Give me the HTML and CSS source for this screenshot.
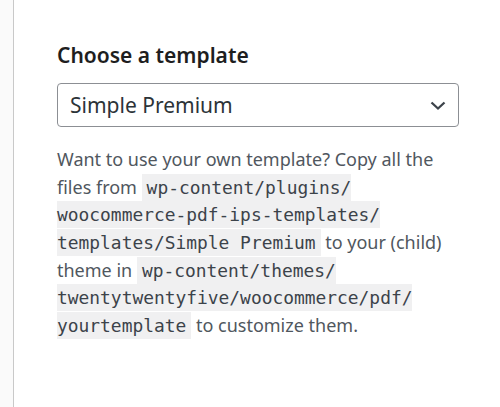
FILE: index.html
```html
<!DOCTYPE html>
<html>
<head>
<meta charset="utf-8">
<link rel="stylesheet" href="styles.css">
</head>
<body>
<div class="layout">
  <aside class="side"></aside>
  <main class="panel">
    <h2 class="title">Choose a template</h2>
    <div class="select">
      <span class="select-value">Simple Premium</span>
      <svg class="chev" width="18" height="11" viewBox="0 0 18 11"><path d="M2.5 2.5 L9 8.5 L15.5 2.5" fill="none" stroke="#3c434a" stroke-width="2.3"/></svg>
    </div>
    <p class="help">Want to use your own template? Copy all the files from <code><span class="seg">wp-content/plugins/</span><wbr><span class="seg">woocommerce-pdf-ips-templates/</span><wbr><span class="seg">templates/Simple Premium</span></code> to your (child) theme in <code><span class="seg">wp-content/themes/</span><wbr><span class="seg">twentytwentyfive/woocommerce/pdf/</span><wbr><span class="seg">yourtemplate</span></code> to customize them.</p>
  </main>
</div>
</body>
</html>
```
FILE: styles.css
```css
html, body { margin: 0; padding: 0; background: #fff; }
body { font-family: "Noto Sans", "Open Sans", sans-serif; }
.layout { display: flex; height: 407px; }
.side { width: 13px; background: #fafafa; border-right: 1px solid #c9c9c9; flex: none; }
.panel { padding: 41px 41px 0 43px; flex: 1; min-width: 0; }
.title { margin: 0 0 14px; font-size: 21px; font-weight: 600; color: #1e1e1e; line-height: 28px; }
.select { box-sizing: border-box; height: 44px; border: 1px solid #8c8f94; border-radius: 4px; display: flex; align-items: center; justify-content: space-between; padding: 0 11px 0 12px; }
.select-value { font-size: 21px; color: #2c3338; }
.chev { display: block; }
.help { margin: 19px 0 0; font-size: 18px; line-height: 27.67px; color: #50575e; }
.help code { font-family: "DejaVu Sans Mono", monospace; font-size: 17.9px; background: #f0f0f1; padding: 3px 5px; color: #3c434a; }
.seg { white-space: nowrap; }
```
